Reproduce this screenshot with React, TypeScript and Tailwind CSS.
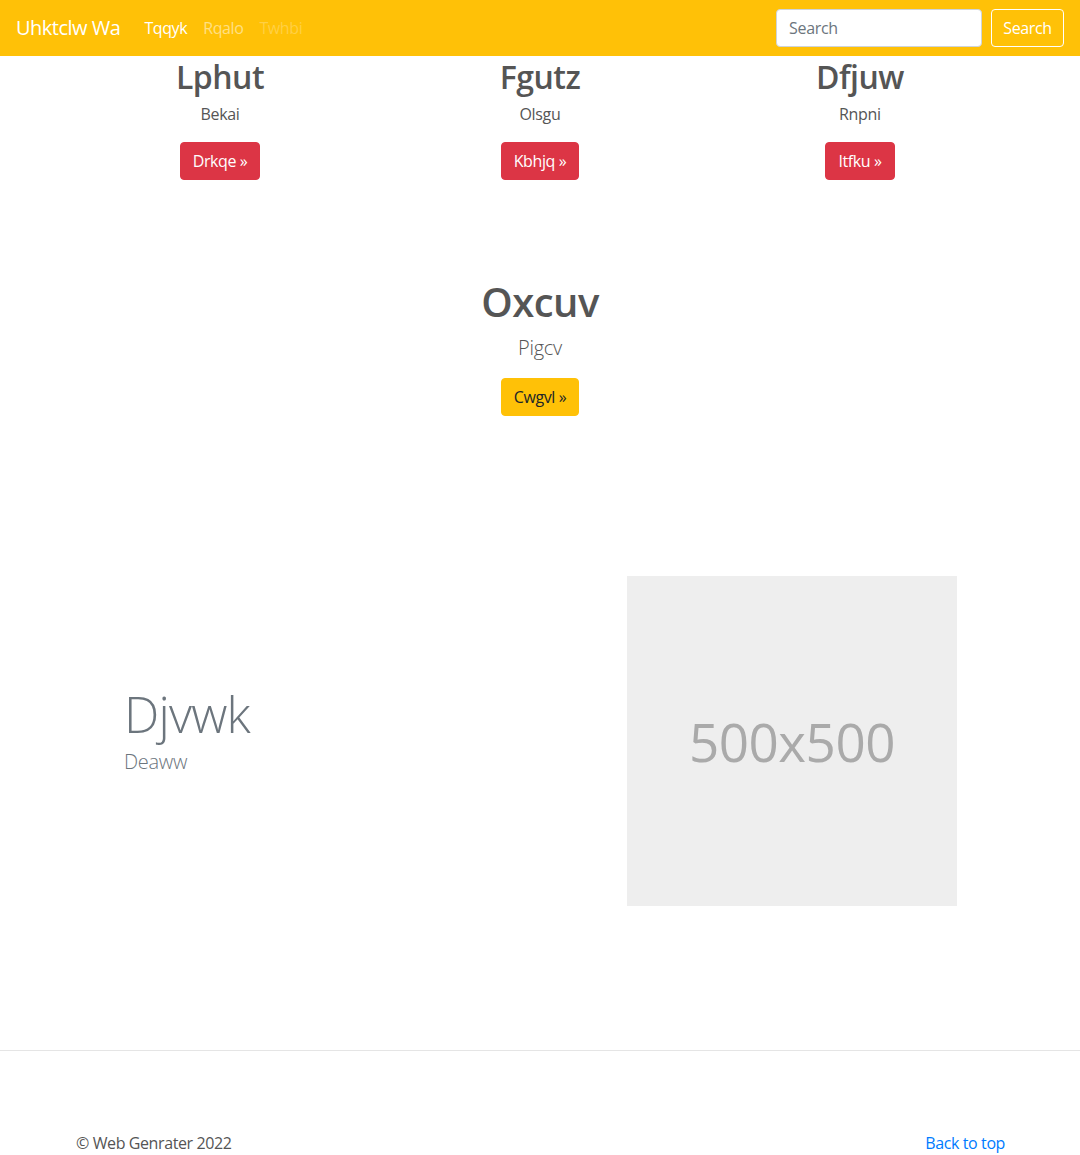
import React from "react";

const font = { fontFamily: '"Open Sans", "Noto Sans", sans-serif' };

function Col({ title, sub, btn }: { title: string; sub: string; btn: string }) {
  return (
    <div className="w-1/3 px-[15px] text-center">
      <h2 className="text-[32px] leading-[1.2] font-semibold tracking-[-0.5px] mb-[6px] text-[#555] pt-[2px]">{title}</h2>
      <p className="mb-4 text-[16px] leading-6 text-[#555] tracking-[-0.3px]">{sub}</p>
      <p className="mb-4">
        <a className="inline-block bg-[#dc3545] border border-[#dc3545] text-white rounded-[4px] px-3 py-[6px] text-[16px] leading-6 tracking-[-0.4px]">
          {btn} »
        </a>
      </p>
    </div>
  );
}

export default function App() {
  return (
    <div className="bg-white min-h-[1155px] text-[#555]" style={font}>
      <nav className="bg-[#ffc107] h-14 flex items-center px-4">
        <a className="text-white text-[20px] leading-[30px] mr-4 tracking-[-0.5px]">Uhktclw Wa</a>
        <div className="flex text-[16px] leading-6 tracking-[-0.4px]">
          <a className="px-2 text-white">Tqqyk</a>
          <a className="px-2 text-white/50">Rqalo</a>
          <a className="px-2 text-white/25">Twhbi</a>
        </div>
        <div className="ml-auto flex items-center">
          <input
            placeholder="Search"
            className="w-[206px] h-[38px] bg-white border border-[#ced4da] rounded-[4px] px-3 text-[16px] text-[#495057] placeholder:text-[#6c757d] outline-none mr-[9px] tracking-[-0.3px]"
          />
          <button className="w-[73px] h-[38px] border border-white text-white rounded-[4px] text-[16px] leading-6 tracking-[-0.4px]">
            Search
          </button>
        </div>
      </nav>

      <div className="w-[960px] mx-auto px-[15px]">
        <div className="flex -mx-[15px]">
          <Col title="Lphut" sub="Bekai" btn="Drkqe" />
          <Col title="Fgutz" sub="Olsgu" btn="Kbhjq" />
          <Col title="Dfjuw" sub="Rnpni" btn="Itfku" />
        </div>

        <div className="text-center pt-[80px]">
          <h1 className="text-[40px] leading-[48px] font-semibold tracking-[-0.5px] mb-[7px] text-[#555] pt-[2px]">Oxcuv</h1>
          <p className="text-[20px] leading-[30px] font-light mb-[15px] tracking-[-0.3px]">Pigcv</p>
          <p className="mb-4">
            <a className="inline-block bg-[#ffc107] border border-[#ffc107] text-[#212529] rounded-[4px] px-3 py-[6px] text-[16px] leading-6 tracking-[-0.4px]">
              Cwgvl »
            </a>
          </p>
        </div>

        <div className="flex items-center mt-[160px]">
          <div className="w-[552px] pl-[49px]">
            <h2 className="text-[50px] leading-[1] font-light tracking-[-0.8px] text-[#6c757d] mb-2">Djvwk</h2>
            <p className="text-[20px] leading-[30px] font-light text-[#6c757d] mb-4 tracking-[-0.3px]">Deaww</p>
          </div>
          <div className="w-[330px] h-[330px] bg-[#eeeeee] flex items-center justify-center">
            <span className="text-[#aaaaaa] text-[53px] tracking-[-0.5px]">500x500</span>
          </div>
        </div>
      </div>

      <hr className="mt-[144px] border-0 border-t border-[#e5e5e5]" />

      <footer className="w-[960px] mx-auto px-[15px] pt-[80px] flex justify-between text-[16px] leading-6 tracking-[-0.4px]">
        <p className="text-[#555] pl-px">© Web Genrater 2022</p>
        <a className="text-[#007bff]">Back to top</a>
      </footer>
    </div>
  );
}
